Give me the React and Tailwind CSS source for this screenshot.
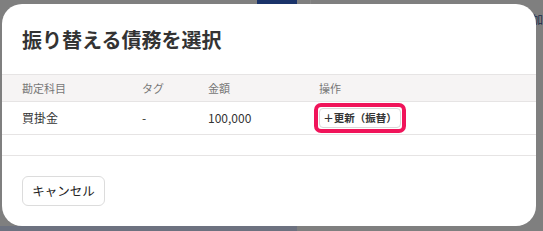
export default function App() {
  const font = { fontFamily: '"Noto Sans CJK JP", "Noto Sans", sans-serif' }

  return (
    <div className="relative h-[231px] w-[543px] overflow-hidden bg-[#7f7f7f]" style={font}>
      {/* dimmed page behind the dialog */}
      <div className="flex h-[4px]">
        <div className="w-[257px]" />
        <div className="w-[40px] bg-[#1a336a]" />
        <div className="w-[13px]" />
        <div className="w-px bg-[#888888]" />
      </div>
      <div className="absolute bottom-0 left-0 flex h-[5px] w-[297px] justify-end bg-[#6d7280]" />
      <div className="absolute right-0 top-[14px] text-[11px] leading-none text-[#1b2a4a]">加</div>

      {/* dialog */}
      <div className="absolute left-[2px] top-[4px] flex h-[222px] w-[534px] flex-col rounded-[20px] bg-white">
        <div className="px-[20px] pb-[20px] pt-[22px]">
          <h2 className="text-[20px] font-bold leading-[28px] text-[#333333]">振り替える債務を選択</h2>
        </div>

        <div className="border-t border-[#e6e4e4]">
          <div className="grid h-[26px] grid-cols-[120px_66px_111px_1fr] items-center bg-[#f6f4f4] pl-[20px] text-[11px] text-[#777777]">
            <div>勘定科目</div>
            <div>タグ</div>
            <div>金額</div>
            <div>操作</div>
          </div>
          <div className="grid h-[33px] grid-cols-[120px_66px_111px_1fr] items-center border-t border-[#e6e4e4] pl-[20px] text-[12px] text-[#333333]">
            <div>買掛金</div>
            <div>-</div>
            <div>100,000</div>
            <div className="-ml-[5px] flex">
              <div className="rounded-[7px] border-[4px] border-[#f0145a] p-px">
                <button className="flex h-[20px] w-[82px] items-center justify-center rounded-[4px] border border-[#d8d8d8] bg-white text-[10.5px] font-bold leading-none text-[#333333]">
                  ＋更新（振替）
                </button>
              </div>
            </div>
          </div>
          <div className="h-[22px] border-y border-[#e6e4e4]" />
        </div>

        <div className="px-[20px] pt-[20px]">
          <button className="h-[30px] w-[83px] rounded-[6px] border border-[#dcdcdc] bg-white text-[12.5px] text-[#222222]">
            キャンセル
          </button>
        </div>
      </div>
    </div>
  )
}
